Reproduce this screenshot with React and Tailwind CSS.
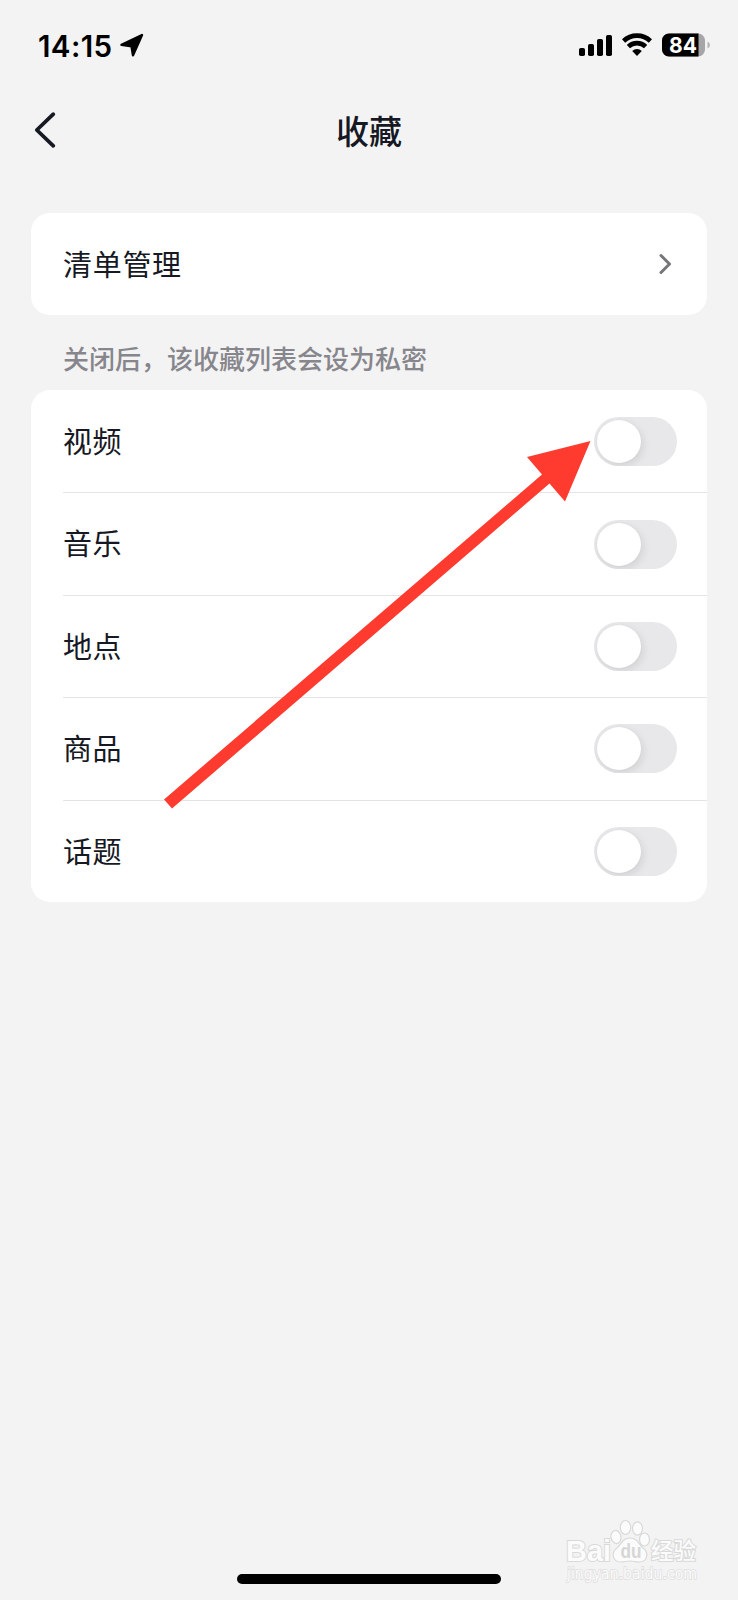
const items = ['视频', '音乐', '地点', '商品', '话题'];

function Toggle() {
  return (
    <button
      type="button"
      role="switch"
      aria-checked="false"
      className="flex h-[49px] w-[83px] items-center overflow-hidden rounded-full bg-[#e8e8ea] pl-[3px]"
    >
      <span className="h-[43px] w-[44px] rounded-[50%] bg-white shadow-[2px_3px_8px_rgba(0,0,0,0.1),0_0_2px_rgba(0,0,0,0.04)]" />
    </button>
  );
}

function StatusBar() {
  return (
    <div className="flex h-[90px] items-center justify-between pl-[38px] pr-[28px]">
      <div className="flex items-center gap-[6px]">
        <span className="w-[76px] pt-[1px] whitespace-nowrap font-['Inter'] text-[29.5px] leading-[40px] font-semibold tracking-[0.4px] text-black">14:15</span>
        <svg width="24" height="24" viewBox="0 0 24 24">
          <path d="M22 2 13 22.3 11.5 13.2 1.5 11.8Z" fill="#000" stroke="#000" strokeWidth="2.4" strokeLinejoin="round" />
        </svg>
      </div>
      <svg width="132" height="26" viewBox="0 0 132 26">
        <g fill="#000">
          <rect x="1" y="16" width="6" height="8" rx="1.8" />
          <rect x="10" y="12" width="6" height="12" rx="1.8" />
          <rect x="19" y="7" width="6" height="17" rx="1.8" />
          <rect x="28" y="3" width="6" height="21" rx="1.8" />
        </g>
        <g fill="none" stroke="#000" strokeWidth="4.6">
          <path d="M45.6 9a19.5 19.5 0 0 1 26.8 0" />
          <path d="M50.4 14.6a12.4 12.4 0 0 1 17.2 0" />
        </g>
        <path d="M54.2 19a7 7 0 0 1 9.6 0L59 24Z" fill="#000" />
        <path d="M91 1.5h29a7 7 0 0 1 7 7v9a7 7 0 0 1-7 7H91a7 7 0 0 1-7-7v-9a7 7 0 0 1 7-7Z" fill="#a6a6a8" />
        <path d="M120.500 1.500H91a7 7 0 0 0-7 7v9a7 7 0 0 0 7 7h29.500Z" fill="#000" />
        <path d="M129.500 9.500q2.500 1 2.500 3.500t-2.500 3.500Z" fill="#b5b5b7" />
        <text x="105" y="21" textAnchor="middle" textLength="28" lengthAdjust="spacingAndGlyphs" className="font-['Inter'] text-[22px] font-bold" fill="#fff">84</text>
      </svg>
    </div>
  );
}

function Header() {
  return (
    <header className="grid h-[84px] grid-cols-[1fr_auto_1fr] items-center pl-[34px] pr-[34px]">
      <svg width="22" height="38" viewBox="0 0 22 38" className="mt-[-5px]">
        <path d="M19.300 3.200 2.800 19 19.300 34.800" fill="none" stroke="#161823" strokeWidth="3.8" strokeLinecap="round" strokeLinejoin="round" />
      </svg>
      <h1 className="mt-[-5px] text-[33px] leading-[48px] font-medium">收藏</h1>
    </header>
  );
}

function Watermark() {
  return (
    <svg width="150" height="76" viewBox="0 0 150 76" className="absolute top-[1518px] left-[562px]">
      <g fill="#fbfbfb" stroke="#d9d9d9" strokeWidth="1.200">
        <ellipse cx="54" cy="19" rx="5" ry="6.600" transform="rotate(-12 54 19)" />
        <ellipse cx="63.500" cy="9.500" rx="5.200" ry="7" />
        <ellipse cx="75.500" cy="10.500" rx="5" ry="6.600" />
        <ellipse cx="82.500" cy="21.500" rx="5" ry="6.500" />
        <path d="M68 20c-8 0-9 7-13 10-6 4-5 14 4 14 4 0 5-1 9-1s5 1 9 1c9 0 10-10 4-14-4-3-5-10-13-10Z" />
      </g>
      <g fill="#fbfbfb" stroke="#d9d9d9" strokeWidth="2" paintOrder="stroke">
        <text x="4" y="43" textLength="45" lengthAdjust="spacingAndGlyphs" className="font-['Liberation_Sans'] text-[29px] font-bold">Bai</text>
        <text x="89" y="41" textLength="45" lengthAdjust="spacingAndGlyphs" className="font-['Noto_Sans_CJK_SC'] text-[22.500px] font-medium">经验</text>
      </g>
      <text x="5" y="61" textLength="130" lengthAdjust="spacingAndGlyphs" fill="#fbfbfb" stroke="#dedede" strokeWidth="1.600" paintOrder="stroke" className="font-['DejaVu_Sans'] text-[16px]">jingyan.baidu.com</text>
      <text x="58.500" y="40" textLength="21" lengthAdjust="spacingAndGlyphs" fill="#d6d6d6" className="font-['Liberation_Sans'] text-[20px] font-bold">du</text>
    </svg>
  );
}

export default function App() {
  return (
    <div className="relative flex h-[1600px] w-[738px] flex-col overflow-hidden bg-[#f3f3f3] font-['Noto_Sans_CJK_SC',sans-serif] text-[#161823]">
      <StatusBar />
      <Header />
      <main className="mt-[39px] px-[31px]">
        <div className="flex h-[102px] items-center justify-between rounded-[19px] bg-white pr-[34px] pl-[32px] text-[29px] tracking-[0.7px]">
          <span className="mt-[-1px]">清单管理</span>
          <svg width="14" height="22" viewBox="0 0 14 22">
            <path d="M2 2.500 10.500 11 2 19.500" fill="none" stroke="#76767a" strokeWidth="3" strokeLinecap="round" strokeLinejoin="round" />
          </svg>
        </div>
        <p className="flex h-[75px] items-center pt-[10px] pl-[32px] text-[26px] font-medium text-[#86868c]">关闭后，该收藏列表会设为私密</p>
        <ul className="h-[512px] rounded-[19px] bg-white pl-[32px]">
          {items.map((item, i) => (
            <li
              key={item}
              className={`flex h-[102.4px] items-center justify-between pr-[30px] text-[29px] tracking-[0.4px] ${i > 0 ? 'border-t border-[#e4e4e6]' : 'pt-px'}`}
            >
              <span className="mt-[-2px]">{item}</span>
              <Toggle />
            </li>
          ))}
        </ul>
      </main>
      <svg width="738" height="1600" viewBox="0 0 738 1600" className="pointer-events-none absolute inset-0">
        <path d="M590.500 441 565 501.500 549.500 483.500 172 808.500 164 799.500 542 474.500 527 457Z" fill="#ff3b30" />
      </svg>
      <Watermark />
      <div className="mt-auto mb-[16px] h-[10px] w-[264px] self-center rounded-full bg-black" />
    </div>
  );
}
